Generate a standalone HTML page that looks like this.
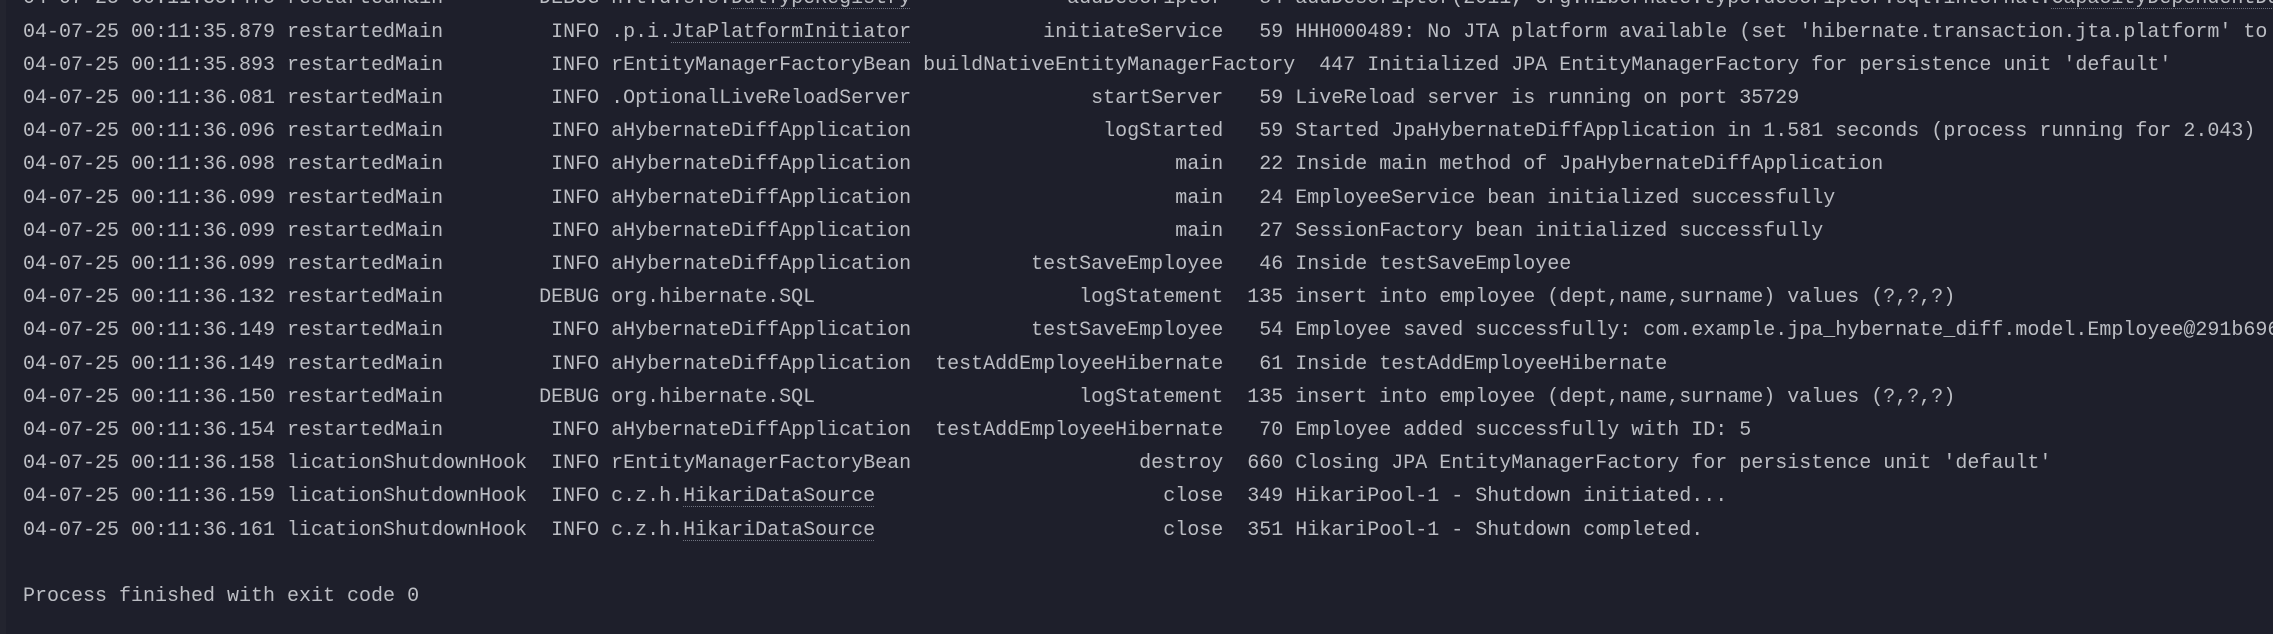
<!DOCTYPE html>
<html><head><meta charset="utf-8"><style>
html,body{margin:0;padding:0;background:#1e1f2b;width:2273px;height:634px;overflow:hidden}
.strip{position:absolute;left:0;top:0;width:6px;height:634px;background:#23242f}
pre{position:absolute;left:23px;top:-17.6px;margin:0;font-family:"Liberation Mono",monospace;font-size:20px;line-height:33.2px;color:#bcbec4;white-space:pre;width:2250px;overflow:hidden}
u{text-decoration:underline dotted #6f7380;text-underline-offset:5px;text-decoration-thickness:1px}
</style></head><body><div class="strip"></div><pre>04-07-25 00:11:35.475 restartedMain        DEBUG h.t.d.s.s.<u>DdlTypeRegistry</u>             addDescriptor   84 addDescriptor(2011, org.hibernate.type.descriptor.sql.internal.<u>CapacityDependentDdlType</u>@5f1a2b3c)
04-07-25 00:11:35.879 restartedMain         INFO .p.i.<u>JtaPlatformInitiator</u>           initiateService   59 HHH000489: No JTA platform available (set 'hibernate.transaction.jta.platform' to enable JTA platform integration)
04-07-25 00:11:35.893 restartedMain         INFO rEntityManagerFactoryBean buildNativeEntityManagerFactory  447 Initialized JPA EntityManagerFactory for persistence unit 'default'
04-07-25 00:11:36.081 restartedMain         INFO .OptionalLiveReloadServer               startServer   59 LiveReload server is running on port 35729
04-07-25 00:11:36.096 restartedMain         INFO aHybernateDiffApplication                logStarted   59 Started JpaHybernateDiffApplication in 1.581 seconds (process running for 2.043)
04-07-25 00:11:36.098 restartedMain         INFO aHybernateDiffApplication                      main   22 Inside main method of JpaHybernateDiffApplication
04-07-25 00:11:36.099 restartedMain         INFO aHybernateDiffApplication                      main   24 EmployeeService bean initialized successfully
04-07-25 00:11:36.099 restartedMain         INFO aHybernateDiffApplication                      main   27 SessionFactory bean initialized successfully
04-07-25 00:11:36.099 restartedMain         INFO aHybernateDiffApplication          testSaveEmployee   46 Inside testSaveEmployee
04-07-25 00:11:36.132 restartedMain        DEBUG org.hibernate.SQL                      logStatement  135 insert into employee (dept,name,surname) values (?,?,?)
04-07-25 00:11:36.149 restartedMain         INFO aHybernateDiffApplication          testSaveEmployee   54 Employee saved successfully: com.example.jpa_hybernate_diff.model.Employee@291b696e
04-07-25 00:11:36.149 restartedMain         INFO aHybernateDiffApplication  testAddEmployeeHibernate   61 Inside testAddEmployeeHibernate
04-07-25 00:11:36.150 restartedMain        DEBUG org.hibernate.SQL                      logStatement  135 insert into employee (dept,name,surname) values (?,?,?)
04-07-25 00:11:36.154 restartedMain         INFO aHybernateDiffApplication  testAddEmployeeHibernate   70 Employee added successfully with ID: 5
04-07-25 00:11:36.158 licationShutdownHook  INFO rEntityManagerFactoryBean                   destroy  660 Closing JPA EntityManagerFactory for persistence unit 'default'
04-07-25 00:11:36.159 licationShutdownHook  INFO c.z.h.<u>HikariDataSource</u>                        close  349 HikariPool-1 - Shutdown initiated...
04-07-25 00:11:36.161 licationShutdownHook  INFO c.z.h.<u>HikariDataSource</u>                        close  351 HikariPool-1 - Shutdown completed.

Process finished with exit code 0
</pre></body></html>
